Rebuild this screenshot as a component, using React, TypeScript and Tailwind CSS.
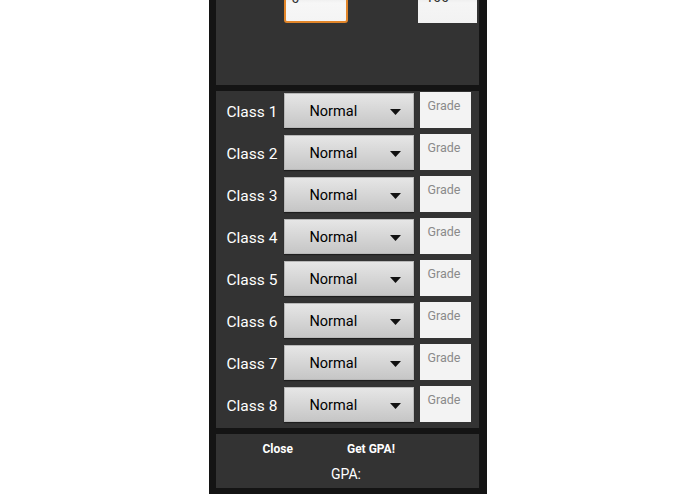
const classes = [1, 2, 3, 4, 5, 6, 7, 8];

const Spinner = () => (
  <div className="relative flex h-[35px] w-[130px] shrink-0 items-center border border-[#b8b8b8] bg-gradient-to-b from-[#e6e6e6] to-[#c6c6c6] pt-[2px] shadow-[0_1px_1px_rgba(0,0,0,0.4)]">
    <span className="ml-[25px] text-[14.5px] text-black">Normal</span>
    <svg className="absolute right-[12px] top-[15px]" width="11" height="6" viewBox="0 0 11 6">
      <polygon points="0,0 11,0 5.5,6" fill="#111" />
    </svg>
  </div>
);

const App = () => {
  return (
    <div className="flex min-h-[494px] w-full justify-center bg-white" style={{ fontFamily: "Roboto, 'Liberation Sans', sans-serif" }}>
      <div className="flex h-[494px] w-[278px] flex-col bg-[#141414] pl-[7px] pr-[8px]">
        {/* range inputs, scrolled partly out of view */}
        <div className="relative h-[85px] shrink-0 overflow-hidden bg-[#333333]">
          <div className="-mt-[17px] flex items-start">
            <div className="ml-[68px] flex h-[40px] w-[64px] items-start rounded-[3px] border-2 border-[#e2862a] bg-gradient-to-b from-[#cfcfcf] via-[#f7f7f7] to-[#f4f4f4] px-[6px] pt-[5px]">
              <span className="text-[14px] leading-[16px] text-[#333]">0</span>
            </div>
            <div className="ml-[70px] flex h-[40px] w-[59px] items-start bg-gradient-to-b from-[#cfcfcf] via-[#f5f5f5] to-[#f2f2f2] px-[8px] pt-[6px]">
              <span className="text-[14px] leading-[16px] text-[#333]">100</span>
            </div>
          </div>
        </div>

        <div className="h-[6px] shrink-0" />

        {/* class rows */}
        <div className="flex shrink-0 flex-col gap-[6px] bg-[#333333] pb-[6px] pl-[11px] pt-[1px]">
          {classes.map((n) => (
            <div key={n} className="flex h-[36px] items-start">
              <span className="mt-[11px] w-[57px] text-[15.5px] leading-[19px] text-white">Class {n}</span>
              <div className="mt-[1px]">
                <Spinner />
              </div>
              <div className="ml-[6px] h-[36px] w-[51px] bg-[#f3f3f3] pl-[8px] pt-[6px] text-[12.5px] leading-[15px] text-[#8a8a8a]">
                Grade
              </div>
            </div>
          ))}
        </div>

        <div className="h-[6px] shrink-0" />

        {/* buttons + result */}
        <div className="flex h-[54px] shrink-0 flex-col bg-[#333333]">
          <div className="mt-[8px] flex h-[14px] items-center">
            <span className="ml-[47px] text-[12px] font-bold text-white">Close</span>
            <span className="ml-[54px] text-[12px] font-bold text-white">Get GPA!</span>
          </div>
          <div className="mt-[10px] flex justify-center">
            <span className="ml-[-2px] text-[14px] leading-[17px] text-white">GPA:</span>
          </div>
        </div>
      </div>
    </div>
  );
};

export default App;
